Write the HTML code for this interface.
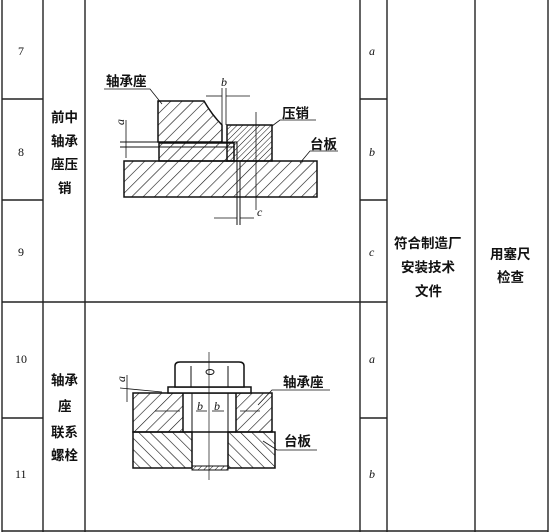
<!DOCTYPE html>
<html><head><meta charset="utf-8"><style>
html,body{margin:0;padding:0;background:#fff;width:550px;height:532px;overflow:hidden}
svg{display:block}
text{font-family:"Liberation Serif","Noto Serif CJK SC","Noto Sans CJK SC",serif;fill:#111}
.c{font-family:"Noto Sans CJK SC","WenQuanYi Zen Hei",sans-serif;font-weight:bold;font-size:13.5px}
.n{font-size:12px}
.i{font-style:italic;font-size:12px}
</style></head><body>
<svg width="550" height="532" viewBox="0 0 550 532" xmlns="http://www.w3.org/2000/svg">
<defs>
<pattern id="h1" patternUnits="userSpaceOnUse" width="8" height="8" patternTransform="rotate(45)"><line x1="0" y1="0" x2="0" y2="8" stroke="#111" stroke-width="1.2"/></pattern>
<pattern id="h2" patternUnits="userSpaceOnUse" width="8" height="8" patternTransform="rotate(-45)"><line x1="0" y1="0" x2="0" y2="8" stroke="#111" stroke-width="1.2"/></pattern>
<pattern id="h3" patternUnits="userSpaceOnUse" width="4" height="4" patternTransform="rotate(45)"><line x1="0" y1="0" x2="0" y2="4" stroke="#111" stroke-width="1"/></pattern>
</defs>
<g stroke="#222" stroke-width="1.4" fill="none">
<line x1="2" y1="0" x2="2" y2="532"/>
<line x1="43" y1="0" x2="43" y2="532"/>
<line x1="85" y1="0" x2="85" y2="532"/>
<line x1="360" y1="0" x2="360" y2="532"/>
<line x1="387" y1="0" x2="387" y2="532"/>
<line x1="475" y1="0" x2="475" y2="532"/>
<line x1="548" y1="0" x2="548" y2="532"/>
<line x1="2" y1="99" x2="43" y2="99"/>
<line x1="2" y1="200" x2="43" y2="200"/>
<line x1="360" y1="99" x2="387" y2="99"/>
<line x1="360" y1="200" x2="387" y2="200"/>
<line x1="2" y1="302" x2="387" y2="302"/>
<line x1="2" y1="418" x2="43" y2="418"/>
<line x1="360" y1="418" x2="387" y2="418"/>
<line x1="2" y1="531" x2="548" y2="531"/>
</g>
<!-- drawing 1 -->
<g stroke="#111" stroke-width="1.5">
<path d="M124 161 H317 V197 H124 Z" fill="url(#h1)"/>
<path d="M158 101 H204 Q212 115 222 125 V142 H158 Z" fill="url(#h1)"/>
<path d="M159 143 H234 V161 H159 Z" fill="url(#h1)"/>
<path d="M227 125 H272 V161 H227 Z" fill="url(#h3)"/>
<path d="M120 142 H237 V218" fill="none" stroke-width="1"/>
<path d="M120 147 H234" fill="none" stroke-width="1"/>
<line x1="237" y1="161" x2="237" y2="225" stroke-width="1"/>
<line x1="240" y1="161" x2="240" y2="225" stroke-width="1"/>
<line x1="256" y1="112" x2="256" y2="210" stroke-width="0.8"/>
<line x1="222" y1="88" x2="222" y2="142" stroke-width="0.8"/>
<line x1="226" y1="88" x2="226" y2="125" stroke-width="0.8"/>
<line x1="206" y1="96" x2="222" y2="96" stroke-width="0.8"/>
<line x1="226" y1="96" x2="250" y2="96" stroke-width="0.8"/>
<line x1="214" y1="218" x2="237" y2="218" stroke-width="0.8"/>
<line x1="240" y1="218" x2="254" y2="218" stroke-width="0.8"/>
<line x1="126" y1="120" x2="126" y2="158" stroke-width="0.8"/>
<path d="M104 89 H150 L162 104" fill="none" stroke-width="0.8"/>
<path d="M272 126 L280 120 H316" fill="none" stroke-width="0.8"/>
<path d="M300 163 L310 151 H338" fill="none" stroke-width="0.8"/>
</g>
<text class="c" x="106" y="86">轴承座</text>
<text class="c" x="282" y="118">压销</text>
<text class="c" x="310" y="149">台板</text>
<text class="i" x="221" y="86">b</text>
<text class="i" x="257" y="216">c</text>
<text class="i" x="124" y="131" transform="rotate(-90 121 128)">a</text>
<!-- drawing 2 -->
<g stroke="#111" stroke-width="1.5">
<path d="M133 393 H183 V432 H133 Z" fill="url(#h1)"/>
<path d="M236 393 H272 V432 H236 Z" fill="url(#h1)"/>
<path d="M133 432 H192 V468 H133 Z" fill="url(#h2)"/>
<path d="M228 432 H275 V468 H228 Z" fill="url(#h2)"/>
<path d="M183 393 H236 M183 432 H236" fill="none"/>
<path d="M168 387 H251 V393 H168 Z" fill="#fff"/>
<path d="M175 387 V366 Q175 362 180 362 H239 Q244 362 244 366 V387 Z" fill="#fff"/>
<line x1="191" y1="366" x2="191" y2="387" stroke-width="1"/>
<line x1="228" y1="366" x2="228" y2="387" stroke-width="1"/>
<line x1="192" y1="393" x2="192" y2="432" stroke-width="1"/>
<line x1="228" y1="393" x2="228" y2="432" stroke-width="1"/>
<path d="M192 432 V466 M228 432 V466" stroke-dasharray="4 2" stroke-width="1" fill="none"/>
<path d="M192 466 H228 V470 H192 Z" fill="url(#h3)" stroke-width="1"/>
<ellipse cx="210" cy="372" rx="4" ry="2.5" fill="none" stroke-width="1"/>
<line x1="209" y1="352" x2="209" y2="480" stroke-width="0.7"/>
<line x1="155" y1="411" x2="180" y2="411" stroke-width="0.8"/>
<line x1="196" y1="411" x2="207" y2="411" stroke-width="0.8"/>
<line x1="212" y1="411" x2="224" y2="411" stroke-width="0.8"/>
<line x1="240" y1="411" x2="260" y2="411" stroke-width="0.8"/>
<line x1="127" y1="375" x2="127" y2="402" stroke-width="0.8"/>
<path d="M120 388 L162 392" fill="none" stroke-width="0.8"/>
<path d="M258 405 L272 390 H330" fill="none" stroke-width="0.8"/>
<path d="M263 441 L277 450 H317" fill="none" stroke-width="0.8"/>
</g>
<text class="c" x="283" y="387">轴承座</text>
<text class="c" x="284" y="446">台板</text>
<text class="i" x="197" y="410">b</text>
<text class="i" x="214" y="410">b</text>
<text class="i" x="123" y="384" transform="rotate(-90 123 382)">a</text>
<!-- table text -->
<text class="n" x="18" y="55">7</text>
<text class="n" x="18" y="156">8</text>
<text class="n" x="18" y="256">9</text>
<text class="n" x="15" y="363">10</text>
<text class="n" x="15" y="478">11</text>
<text class="c" x="51" y="122">前中</text>
<text class="c" x="51" y="146">轴承</text>
<text class="c" x="51" y="169">座压</text>
<text class="c" x="58" y="193">销</text>
<text class="c" x="51" y="385">轴承</text>
<text class="c" x="58" y="411">座</text>
<text class="c" x="51" y="437">联系</text>
<text class="c" x="51" y="460">螺栓</text>
<text class="i" x="369" y="55">a</text>
<text class="i" x="369" y="156">b</text>
<text class="i" x="369" y="256">c</text>
<text class="i" x="369" y="363">a</text>
<text class="i" x="369" y="478">b</text>
<text class="c" x="394" y="248">符合制造厂</text>
<text class="c" x="401" y="272">安装技术</text>
<text class="c" x="415" y="296">文件</text>
<text class="c" x="490" y="259">用塞尺</text>
<text class="c" x="497" y="282">检查</text>
</svg>
</body></html>
